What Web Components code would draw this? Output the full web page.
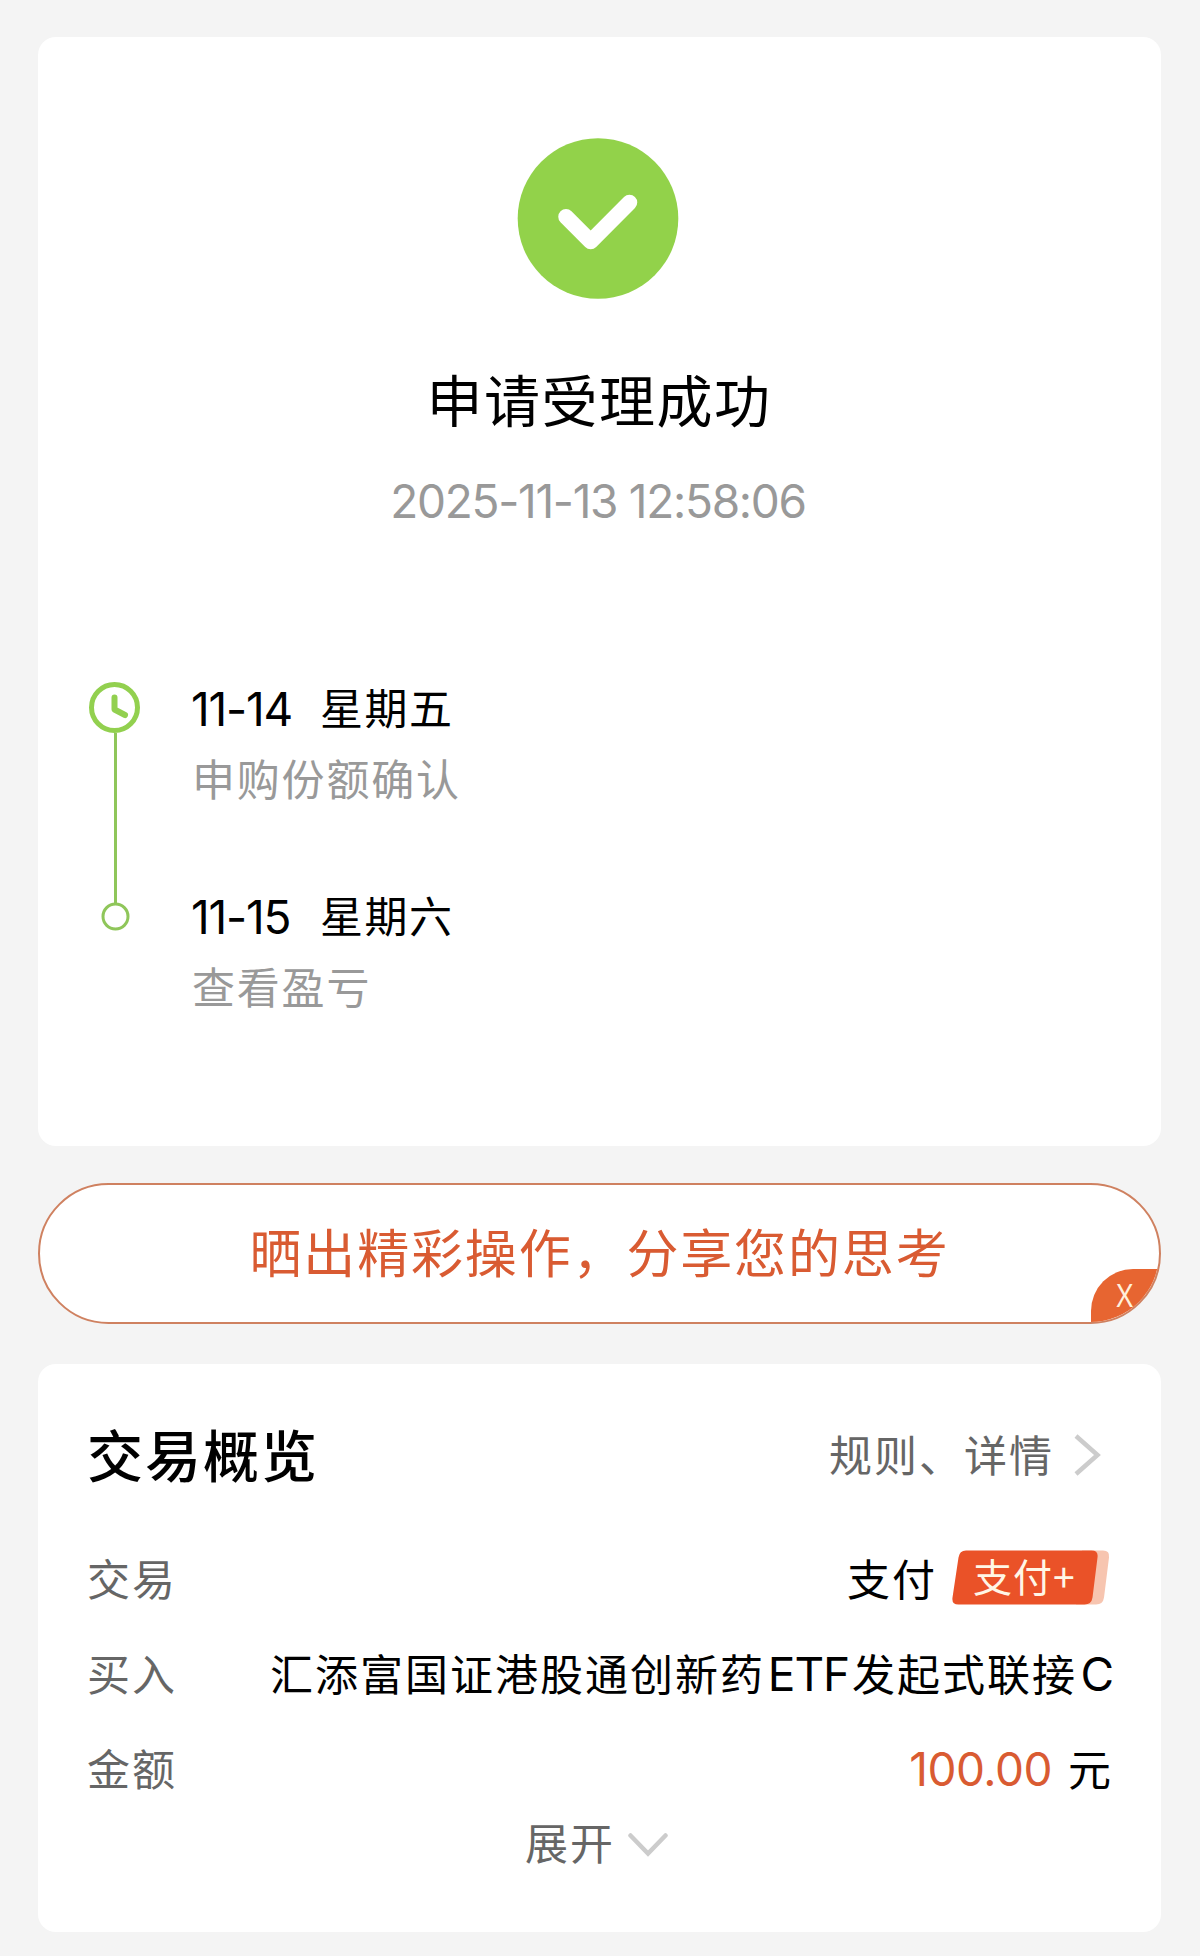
<!DOCTYPE html>
<html lang="zh-CN">
<head>
  <meta charset="UTF-8">
  <meta name="viewport" content="width=device-width, initial-scale=1.0">
  <title>申请受理成功</title>
  <style>
    body {
      margin: 0;
      background: #f4f4f4;
      color: #000;
      font-family: Inter, "Noto Sans CJK SC", sans-serif;
      --orange: #d95b32;
      --muted: #999;
      --label: #666;
    }
  </style>
</head>
<body>
  <result-page>
    <panel-card>
      <result-header datetime="2025-11-13 12:58:06">申请受理成功</result-header>
      <time-line>
        <time-step date="11-14" weekday="星期五" current>申购份额确认</time-step>
        <time-step date="11-15" weekday="星期六">查看盈亏</time-step>
      </time-line>
    </panel-card>

    <share-banner>晒出精彩操作，分享您的思考</share-banner>

    <panel-card>
      <overview-header action="规则、详情">交易概览</overview-header>
      <detail-row label="交易"><span style="margin-right: 15px">支付</span><pay-badge>支付+</pay-badge></detail-row>
      <detail-row label="买入">汇添富国证港股通创新药<latin-text>ETF</latin-text>发起式联接<latin-text class="last">C</latin-text></detail-row>
      <detail-row label="金额"><amount-text>100.00</amount-text>元</detail-row>
      <expand-toggle>展开</expand-toggle>
    </panel-card>
  </result-page>

  <script>
    function define(name, html) {
      customElements.define(name, class extends HTMLElement {
        connectedCallback() {
          if (this.shadowRoot) return;
          this.attachShadow({ mode: "open" });
          this.shadowRoot.innerHTML = html(this);
        }
      });
    }

    define("result-page", () => `
      <style>
        :host {
          display: flex;
          flex-direction: column;
          box-sizing: border-box;
          width: 1200px;
          height: 1956px;
          padding: 37px 39px 24px 38px;
        }

        ::slotted(panel-card:first-child) {
          height: 1109px;
          margin-bottom: 37px;
        }

        ::slotted(panel-card:last-child) {
          height: 568px;
          margin-top: 40px;
        }
      </style>
      <slot></slot>
    `);

    define("panel-card", () => `
      <style>
        :host {
          display: block;
          box-sizing: border-box;
          flex: none;
          background: #fff;
          border-radius: 18px;
          padding: 0 51px 0 50px;
        }
      </style>
      <slot></slot>
    `);

    define("result-header", (el) => `
      <style>
        :host {
          display: flex;
          flex-direction: column;
          align-items: center;
          padding-top: 101px;
        }

        svg {
          width: 162px;
          height: 161px;
          margin-right: 3px;
        }

        h1 {
          margin: 63px 0 0;
          font-size: 56px;
          font-weight: 400;
          line-height: 80px;
          letter-spacing: 1.5px;
        }

        time {
          margin: 29px 2px 0 0;
          font-size: 46px;
          line-height: 60px;
          letter-spacing: -1.3px;
          color: var(--muted);
        }
      </style>
      <svg viewBox="0 0 162 161">
        <circle cx="81" cy="80.5" r="80.3" fill="#92d24a"/>
        <path d="M49 78.7 73.7 103.5 112.5 64.5" fill="none" stroke="#fff" stroke-width="15.5" stroke-linecap="round" stroke-linejoin="round"/>
      </svg>
      <h1><slot></slot></h1>
      <time>${el.getAttribute("datetime")}</time>
    `);

    define("time-line", () => `
      <style>
        :host {
          display: block;
          margin-top: 148px;
        }
      </style>
      <slot></slot>
    `);

    define("time-step", (el) => `
      <style>
        :host {
          display: flex;
          height: 208px;
        }

        .marker {
          display: flex;
          flex-direction: column;
          align-items: center;
          flex: none;
          width: 55px;
          padding-top: 15px;
        }

        :host([current]) .marker {
          padding-top: 2px;
          margin-bottom: -17px;
        }

        svg {
          flex: none;
          display: block;
        }

        .clock {
          margin-right: 2px;
        }

        .line {
          flex: 1;
          width: 3px;
          margin-top: -1px;
          background: #8fc65a;
        }

        .text {
          margin-left: 49px;
        }

        .when {
          display: flex;
          line-height: 60px;
        }

        .date {
          width: 129px;
          margin-left: -1px;
          font-size: 46px;
          letter-spacing: -1.2px;
        }

        .weekday {
          font-size: 43px;
          letter-spacing: 1.5px;
        }

        .note {
          margin-top: 11px;
          font-size: 43px;
          line-height: 60px;
          letter-spacing: 1.8px;
          color: var(--muted);
        }
      </style>
      <div class="marker">
        ${el.hasAttribute("current") ? `
          <svg class="clock" width="53" height="53" viewBox="0 0 53 53" fill="none" stroke="#92d04f">
            <circle cx="26.5" cy="26.5" r="23" stroke-width="5"/>
            <path d="M26.5 16.5v12l10.5 5.5" stroke-width="6" stroke-linecap="round" stroke-linejoin="round"/>
          </svg>
          <div class="line"></div>
        ` : `
          <svg width="29" height="29" viewBox="0 0 29 29" fill="none" stroke="#8fc65a">
            <circle cx="14.5" cy="14.5" r="12.5" stroke-width="3"/>
          </svg>
        `}
      </div>
      <div class="text">
        <div class="when">
          <span class="date">${el.getAttribute("date")}</span>
          <span class="weekday">${el.getAttribute("weekday")}</span>
        </div>
        <div class="note"><slot></slot></div>
      </div>
    `);

    define("share-banner", () => `
      <style>
        :host {
          display: flex;
          align-items: center;
          justify-content: center;
          flex: none;
          position: relative;
          box-sizing: border-box;
          height: 141px;
          padding-bottom: 6px;
          border: 2px solid #cf8160;
          border-radius: 70.5px;
          background: #fff;
          overflow: hidden;
          color: var(--orange);
          font-size: 52px;
          letter-spacing: 1.85px;
        }

        /* close tab tucked into the rounded corner */
        .close {
          position: absolute;
          right: 0;
          bottom: 0;
          box-sizing: border-box;
          width: 68px;
          height: 53px;
          padding-left: 25px;
          border-top-left-radius: 42px;
          background: #e76531;
          color: #fff0dc;
          font: 350 31px/49px "Noto Sans CJK SC", sans-serif;
          letter-spacing: 0;
        }
      </style>
      <span><slot></slot></span>
      <span class="close">X</span>
    `);

    define("overview-header", (el) => `
      <style>
        :host {
          display: flex;
          align-items: center;
          justify-content: space-between;
          height: 80px;
          padding-top: 51px;
        }

        h2 {
          margin: 0 0 5px -1px;
          font-size: 56px;
          font-weight: 500;
          letter-spacing: 2px;
        }

        .action {
          display: flex;
          align-items: center;
          font-size: 43px;
          letter-spacing: 2px;
          color: var(--label);
        }

        .name {
          margin-bottom: 4px;
        }

        svg {
          margin: 0 9px 1px 20px;
        }
      </style>
      <h2><slot></slot></h2>
      <span class="action">
        <span class="name">${el.getAttribute("action")}</span>
        <svg width="27" height="44" viewBox="0 0 27 44" fill="none" stroke="#ccc" stroke-width="4.5">
          <path d="M2 3 23.5 22 2 41"/>
        </svg>
      </span>
    `);

    define("detail-row", (el) => `
      <style>
        :host {
          display: flex;
          align-items: center;
          justify-content: space-between;
          box-sizing: border-box;
          height: 95px;
          padding-bottom: 4px;
          font-size: 43px;
          letter-spacing: 2px;
        }

        :host(:nth-child(2)) {
          margin-top: 36px;
        }

        .label {
          margin-left: -1px;
          color: var(--label);
        }

        .value {
          display: flex;
          align-items: center;
          margin-right: -3px;
          white-space: nowrap;
        }
      </style>
      <span class="label">${el.getAttribute("label")}</span>
      <span class="value"><slot></slot></span>
    `);

    define("latin-text", () => `
      <style>
        :host {
          display: block;
          width: 87px;
          margin-top: 4px;
          text-align: center;
          font-size: 46px;
          letter-spacing: -1px;
        }

        :host(.last) {
          width: 36px;
          text-align: right;
        }
      </style>
      <slot></slot>
    `);

    define("amount-text", () => `
      <style>
        :host {
          margin: 4px 16px 0 0;
          font-size: 46px;
          letter-spacing: -0.5px;
          color: var(--orange);
        }
      </style>
      <slot></slot>
    `);

    define("pay-badge", () => `
      <style>
        :host {
          display: grid;
          width: 158px;
          height: 55px;
          margin: 2px 3px 0 0;
          color: #fff6e6;
        }

        svg, span {
          grid-area: 1 / 1;
        }

        span {
          padding-left: 21px;
          font-family: "Noto Sans CJK SC", sans-serif;
          font-size: 39px;
          line-height: 51px;
          letter-spacing: 1px;
        }
      </style>
      <svg width="158" height="55" viewBox="0 0 158 55">
        <path d="M130 .5h21q7 0 6 7l-5 40q-1 7-8 7h-20z" fill="#f7c5b0"/>
        <path d="M14 .5h125.500q7 0 6 7l-5 40q-1 7-8 7H6.500q-7 0-6-7l6-40q1-7 7.500-7z" fill="#ea5228"/>
      </svg>
      <span><slot></slot></span>
    `);

    define("expand-toggle", () => `
      <style>
        :host {
          display: flex;
          align-items: center;
          justify-content: center;
          box-sizing: border-box;
          height: 56px;
          padding: 0 5px 6px 0;
          font-size: 43px;
          letter-spacing: 2px;
          color: var(--label);
        }

        svg {
          margin: 7px 0 0 13px;
        }
      </style>
      <slot></slot>
      <svg width="40" height="24" viewBox="0 0 40 24" fill="none" stroke="#ccc" stroke-width="4.5" stroke-linecap="round">
        <path d="M2.5 2.5 20 20.5 37.5 2.5"/>
      </svg>
    `);
  </script>
</body>
</html>
